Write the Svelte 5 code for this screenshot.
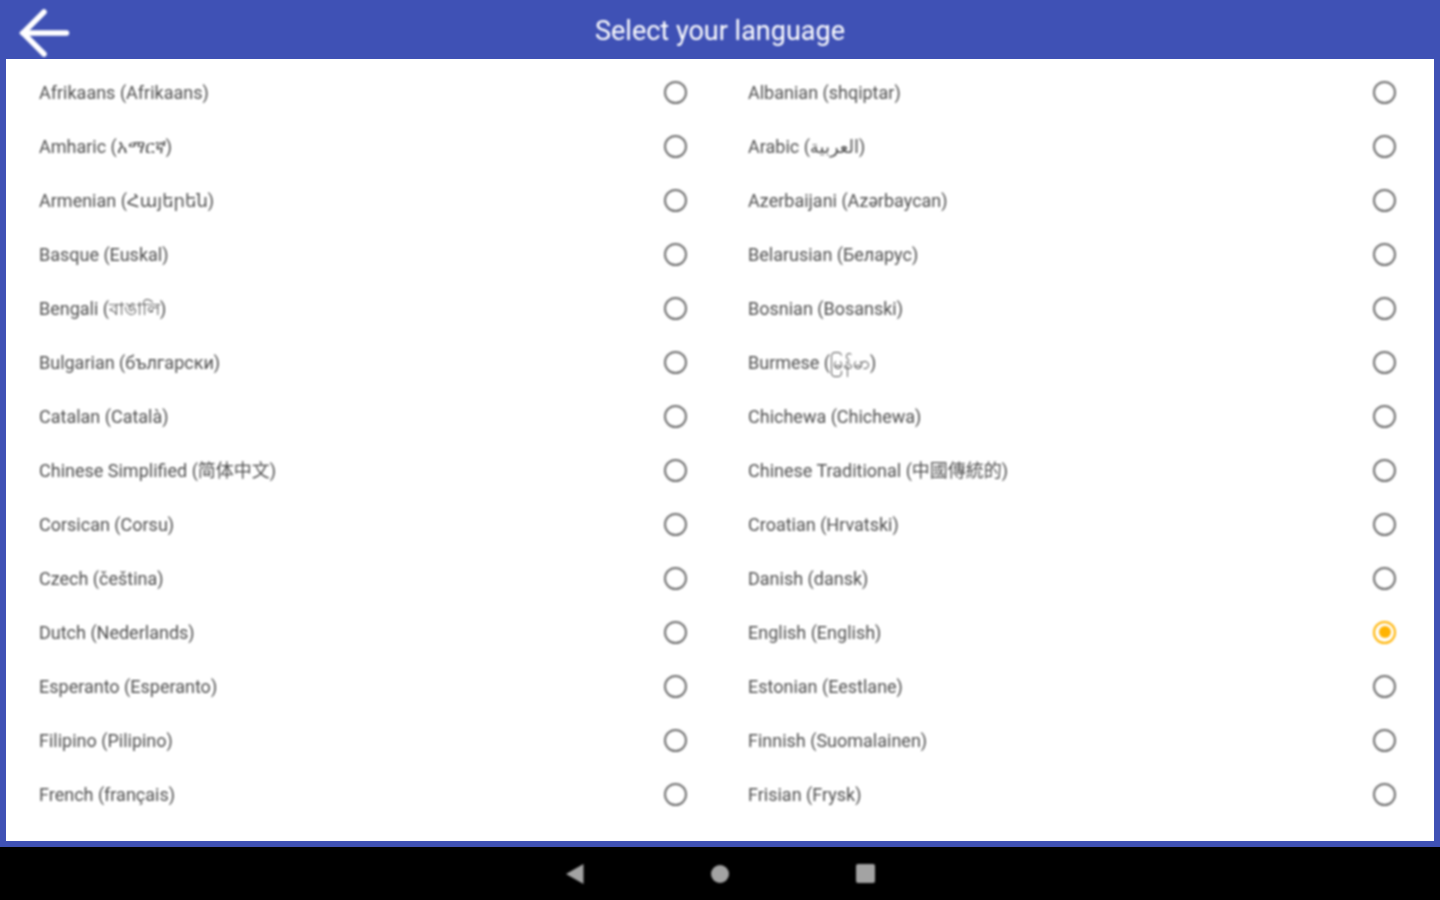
<script>
  let languages = [
    'Afrikaans (Afrikaans)', 'Albanian (shqiptar)',
    'Amharic (አማርኛ)', 'Arabic (العربية)',
    'Armenian (Հայերեն)', 'Azerbaijani (Azərbaycan)',
    'Basque (Euskal)', 'Belarusian (Беларус)',
    'Bengali (বাঙালি)', 'Bosnian (Bosanski)',
    'Bulgarian (български)', 'Burmese (မြန်မာ)',
    'Catalan (Català)', 'Chichewa (Chichewa)',
    'Chinese Simplified (简体中文)', 'Chinese Traditional (中國傳統的)',
    'Corsican (Corsu)', 'Croatian (Hrvatski)',
    'Czech (čeština)', 'Danish (dansk)',
    'Dutch (Nederlands)', 'English (English)',
    'Esperanto (Esperanto)', 'Estonian (Eestlane)',
    'Filipino (Pilipino)', 'Finnish (Suomalainen)',
    'French (français)', 'Frisian (Frysk)'
  ]
  let selected = $state('English (English)')
</script>

<div class="screen">
  <header class="topbar">
    <button class="back" aria-label="Back">
      <svg width="56" height="52" viewBox="0 0 56 52" fill="none" stroke="#fff" stroke-width="5.5" stroke-linecap="round" stroke-linejoin="miter">
        <path d="M49.5 26H6"/>
        <path d="M27 5 6 26l21 21"/>
      </svg>
    </button>
    <h1>Select your language</h1>
  </header>

  <main class="panel">
    <div class="list">
      {#each languages as lang}
        <button class="row" onclick={() => (selected = lang)}>
          <span class="name">{lang}</span>
          <span class="radio" class:on={selected === lang}></span>
        </button>
      {/each}
    </div>
  </main>

  <footer class="navbar">
    <svg width="18" height="20" viewBox="0 0 18 20" fill="#a3a3a3"><path d="M17.5 0v20L0 10z"/></svg>
    <span class="home"></span>
    <span class="recent"></span>
  </footer>
</div>

<style>
  :global(body) {
    margin: 0;
    background: #000;
  }

  .screen {
    width: 1440px;
    height: 900px;
    display: flex;
    flex-direction: column;
    overflow: hidden;
    font-family: Roboto, "Noto Sans", "Noto Sans CJK SC", "DejaVu Sans", sans-serif;
  }

  /* the capture is an upscaled one, everything drawn on the bars is soft */
  .back, h1, .name, .radio, .navbar > * {
    filter: blur(0.8px);
  }

  .topbar {
    height: 59px;
    flex: none;
    background: #3f51b5;
    position: relative;
    display: flex;
    align-items: center;
    justify-content: center;
  }

  .back {
    position: absolute;
    left: 17px;
    top: 7px;
    padding: 0;
    border: none;
    background: none;
    line-height: 0;
  }

  h1 {
    margin: 2px 0 0;
    font-size: 27px;
    font-weight: 400;
    color: #fff;
  }

  .panel {
    flex: none;
    height: 782px;
    margin: 0 6px;
    background: #fff;
    padding-right: 10px;
    box-shadow: 0 0 0 6px #3f51b5;
    clip-path: inset(0 -6px -6px -6px);
  }

  .list {
    display: grid;
    grid-template-columns: 709px 709px;
    grid-auto-rows: 54px;
    padding-top: 6px;
  }

  .row {
    display: flex;
    align-items: center;
    justify-content: space-between;
    padding: 0 28px 0 33px;
    border: none;
    background: none;
    font: inherit;
    text-align: left;
  }

  .name {
    margin-top: 2px;
    font-size: 18px;
    line-height: 20px;
    color: #4f4f4f;
    white-space: nowrap;
  }

  .radio {
    width: 19px;
    height: 19px;
    border: 2.5px solid #6f6f6f;
    border-radius: 50%;
    position: relative;
  }

  .radio.on {
    border-color: #ffb300;
  }

  .radio.on::after {
    content: "";
    position: absolute;
    inset: 3.5px;
    border-radius: 50%;
    background: #ffb300;
  }

  .navbar {
    flex: 1;
    margin-top: 6px;
    background: #000;
    display: flex;
    align-items: center;
    justify-content: center;
    gap: 127px;
  }

  .home {
    width: 18px;
    height: 18px;
    border-radius: 50%;
    background: #a3a3a3;
  }

  .recent {
    width: 19px;
    height: 19px;
    border-radius: 2px;
    background: #a3a3a3;
  }
</style>
